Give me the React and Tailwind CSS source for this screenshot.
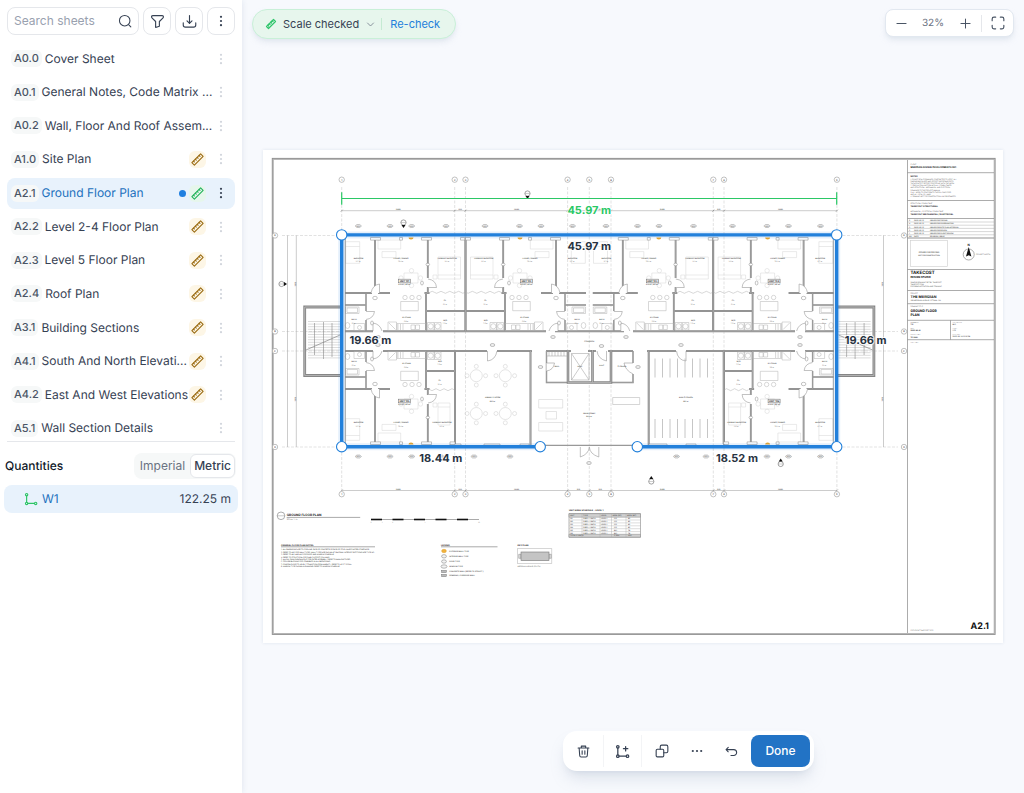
import { Fragment } from "react";
import { TbRuler2 } from "react-icons/tb";

const FONT = "font-['Inter','Liberation_Sans',sans-serif]";

const sheets = [
  { code: "A0.0", name: "Cover Sheet" },
  { code: "A0.1", name: "General Notes, Code Matrix ..." },
  { code: "A0.2", name: "Wall, Floor And Roof Assem..." },
  { code: "A1.0", name: "Site Plan", scale: true },
  { code: "A2.1", name: "Ground Floor Plan", scale: true, active: true },
  { code: "A2.2", name: "Level 2-4 Floor Plan", scale: true },
  { code: "A2.3", name: "Level 5 Floor Plan", scale: true },
  { code: "A2.4", name: "Roof Plan", scale: true },
  { code: "A3.1", name: "Building Sections", scale: true },
  { code: "A4.1", name: "South And North Elevati...", scale: true },
  { code: "A4.2", name: "East And West Elevations", scale: true },
  { code: "A5.1", name: "Wall Section Details" },
];

function Icon({ size = 16, stroke = 1.6, className = "", children }) {
  return (
    <svg
      width={size}
      height={size}
      viewBox="0 0 24 24"
      fill="none"
      stroke="currentColor"
      strokeWidth={stroke}
      strokeLinecap="round"
      strokeLinejoin="round"
      className={`shrink-0 ${className}`}
      aria-hidden="true"
    >
      {children}
    </svg>
  );
}

function Dots({ size = 14, horizontal = false, className = "" }) {
  return (
    <svg width={size} height={size} viewBox="0 0 14 14" fill="currentColor" className={className} aria-hidden="true">
      {[2.8, 7, 11.2].map((p) => (
        <circle key={p} cx={horizontal ? p : 7} cy={horizontal ? 7 : p} r="1.1" />
      ))}
    </svg>
  );
}

function PolylineIcon({ className = "", size = 16, plus = false }) {
  return (
    <Icon size={size} stroke={2} className={className}>
      <circle cx="4.5" cy="4.5" r="2" />
      <circle cx="4.5" cy="19.5" r="2" />
      <circle cx="20" cy="19.5" r="2" />
      <path d="M4.5 6.5v11M6.5 19.5H18" />
      {plus && <path d="M17 4v7M13.500 7.500h7" />}
    </Icon>
  );
}

function HeaderButton({ label, children }) {
  return (
    <button
      type="button"
      aria-label={label}
      className="flex size-7 shrink-0 items-center justify-center rounded-lg border border-gray-200 bg-white text-gray-700"
    >
      {children}
    </button>
  );
}

function SheetRow({ sheet }) {
  const { code, name, scale, active } = sheet;
  return (
    <li className={`flex h-[31px] items-center rounded-lg pr-[7px] pl-1 ${active ? "bg-[#e8f2fc]" : ""}`}>
      <span className="rounded-md bg-[#f6f8f8] px-[3px] text-[11px] leading-[17px] font-medium text-gray-600">{code}</span>
      <a href="#" className={`ml-[3px] min-w-0 flex-1 text-[12px] leading-4 whitespace-nowrap ${active ? "text-[#2170bd]" : "text-gray-700"}`}>
        {name}
      </a>
      {active && <span className="mr-[3px] size-[7px] rounded-full bg-[#1f7fe0]" />}
      {scale && (
        <span className={`flex size-[17px] items-center justify-center rounded-md ${active ? "bg-[#e6f6ec] text-[#22b35a]" : "bg-[#fdf6e6] text-[#9a6b12]"}`}>
          <TbRuler2 size={15} strokeWidth={1.7} />
        </span>
      )}
      <button type="button" aria-label={`Options for ${code}`} className={`ml-2 ${active ? "text-gray-700" : "text-gray-300"}`}>
        <Dots />
      </button>
    </li>
  );
}

function Sidebar() {
  return (
    <aside className="flex w-[242px] shrink-0 flex-col bg-white shadow-[0_0_6px_rgba(40,70,120,0.12)]">
      <div className="flex gap-1 px-[7px] pt-[7px]">
        <label className="flex h-7 min-w-0 flex-1 items-center rounded-lg border border-gray-200 px-1.5">
          <input
            type="text"
            aria-label="Search sheets"
            placeholder="Search sheets"
            className="min-w-0 flex-1 text-[12px] leading-4 outline-none placeholder:text-gray-400"
          />
          <Icon size={14} stroke={1.8} className="text-gray-700">
            <circle cx="11.500" cy="11.500" r="9" />
            <path d="M18.500 18.500 22 22" />
          </Icon>
        </label>
        <HeaderButton label="Filter">
          <Icon size={15} stroke={1.8}>
            <path d="M4.500 2.500h15c1.500 0 2 1 2 2 0 .8-.3 1.600-1 2.200L15 12v7.500l-6 2V12L3.500 6.700c-.7-.6-1-1.400-1-2.200 0-1 .5-2 2-2z" />
          </Icon>
        </HeaderButton>
        <HeaderButton label="Download">
          <Icon size={15} stroke={1.8}>
            <path d="M12 2.500V15M8 11l4 4 4-4M2 14v3.500c0 2 1 3.500 3.500 3.500h13c2.500 0 3.500-1.500 3.500-3.500V14" />
          </Icon>
        </HeaderButton>
        <HeaderButton label="More">
          <Dots />
        </HeaderButton>
      </div>

      <nav aria-label="Sheets" className="mx-[7px] mt-2 h-[399px] overflow-hidden border-b border-gray-200">
        <ul className="flex h-[401px] flex-col justify-between">
          {sheets.map((s) => (
            <SheetRow key={s.code} sheet={s} />
          ))}
        </ul>
      </nav>

      <div className="mt-[11px] flex items-center justify-between pr-[6px] pl-[5px]">
        <h2 className="text-[12px] leading-4 font-medium text-gray-900">Quantities</h2>
        <div className="flex rounded-lg bg-[#f6f8f8] p-px text-[12px] leading-4">
          <button type="button" className="px-[5px] py-1 text-gray-500">Imperial</button>
          <button type="button" className="rounded-md border border-gray-200 bg-white px-[3px] py-[3px] font-medium text-gray-700">Metric</button>
        </div>
      </div>

      <div className="mx-1 mt-[6px] flex h-7 items-center rounded-lg bg-[#e8f2fc] pr-[7px] pl-5 text-[12px] leading-4">
        <PolylineIcon size={14} className="text-[#2ec566]" />
        <span className="ml-1 flex-1 text-[#2170bd]">W1</span>
        <span className="text-gray-700">122.25 m</span>
      </div>
    </aside>
  );
}

/* ---------- floor plan drawing ---------- */

const INK = "#8b8b8b";
const LIGHT = "#d4d4d4";

function Walls({ d, w = 1.8 }) {
  return (
    <>
      <path d={d} stroke="#868686" strokeWidth={w} fill="none" />
      <path d={d} stroke="#b5b5b5" strokeWidth={w / 3} fill="none" />
    </>
  );
}

function Tiny({ x, y, size = 1.9, anchor = "middle", bold = true, fill = "#666", children }) {
  return (
    <text x={x} y={y} fontSize={size} textAnchor={anchor} fontWeight={bold ? 700 : 400} fill={fill}>
      {children}
    </text>
  );
}

// One dwelling, drawn in the position of unit 101; the others are mirrored copies.
function Unit({ flipX = 0, flipY = false, right = 465.5, label }) {
  const sx = flipX ? -1 : 1;
  const sy = flipY ? -1 : 1;
  const tx = (x) => (flipX ? flipX - x : x);
  const ty = (y) => (flipY ? 682 - y : y);
  const mid = (429 + right) / 2;
  const name = (x, y, t, area) => (
    <Fragment key={t}>
      <Tiny x={tx(x)} y={ty(y)}>{t}</Tiny>
      <Tiny x={tx(x)} y={ty(y) + 3.6} size={1.6} bold={false}>{area}</Tiny>
    </Fragment>
  );
  return (
    <g>
      <g transform={`translate(${flipX} ${flipY ? 682 : 0}) scale(${sx} ${sy})`}>
        <Walls d={`M375 238v55M345 293h27M378 293h12M427.800 238v40M427.800 287v6M424.500 293h5M426 293v38M426 311H${right}M${right} 238V331`} />
        <Walls w={1.4} d="M345 305h21M366 293v18M366 320v11" />
        <g fill="none" stroke={LIGHT} strokeWidth=".5">
          <path d="M345.700 241.700h14v21.600h-14zM345.700 246.500h14M378 240h22.700v9H378zM382 251.600h14v6h-14zM404 273h14v10h-14z" />
          <path d={`M438 257h${right - 443}v22H438zM438 275h${right - 443}M433 275h4v4h-4z`} />
          <circle cx="411.500" cy="270.700" r="2.200" />
          <circle cx="411.500" cy="285.500" r="2.200" />
          <circle cx="401" cy="278" r="2.200" />
          <circle cx="420.500" cy="278" r="2.200" />
        </g>
        <g fill="none" stroke="#b0b0b0" strokeWidth=".5">
          {[405, 412, 419].map((x) => (
            <circle key={x} cx={x} cy="297.500" r="2.200" />
          ))}
          <path d="M400.700 301.500h17.600v9.200h-17.600zM388 322h8.500v8.500H388zM389 323l6.500 6.500M397 323.500h29v7h-29zM411 325h4v4.500h-4zM415.500 325h4v4.500h-4zM398 324v6M403 324v6M400.500 324v6" />
          <path d="M345.500 307h13.500v6.500h-13.500zM347 308h10.500v4.500H347zM354 323.500h10.500v7H354z" />
          <circle cx="359.500" cy="327.500" r="2" />
          <ellipse cx="347.500" cy="325.500" rx="2.300" ry="3" />
          <path d="M427.500 322.500h6.500v7.500h-6.500zM434.500 322.500h6.500v7.500h-6.500z" />
          <circle cx="430.700" cy="326.300" r="2.600" />
          <circle cx="437.700" cy="326.300" r="2.600" />
          <path d={right > 460 ? "M430 292.300q2.200-2 4.400 0t4.400 0 4.400 0 4.400 0 4.400 0 4.400 0 4.400 0 4 0" : "M430 292.300q2-2 4 0t4 0 4 0 4 0 4 0 4 0"} />
        </g>
        <g fill="#fff" stroke="#999" strokeWidth=".6">
          <path d="M379.500 293v-9q-7 1-8.500 9M428 279q8 1 8.500 8.500h-8M366 311.500h8.500q-1 7-8.500 8M373 331v-8q7 1 9 8" />
          <path d="M370.500 237.500h10v2.600h-10zM421.500 237.500h10v2.600h-10zM399.500 237.500h3v2.600h-3z" />
          <path d={`M${right - 5} 237.500h5v2.600h-5z`} />
        </g>
        <path d="M408.500 237.500h5a2.500 2 0 0 1-5 0z" fill="#e9a52a" />
        <g fill="#fff" stroke="#888" strokeWidth=".5">
          <ellipse cx="375" cy="298" rx="2.300" ry="1.700" />
          <ellipse cx="422" cy="283" rx="1.400" ry="2" />
          <ellipse cx="427.800" cy="264.500" rx="1.800" ry="1.300" />
          <ellipse cx="372" cy="323" rx="1.400" ry="2" />
        </g>
      </g>
      <rect x={tx(404.500) - 6} y={ty(281) - 1.800} width="12" height="3.600" fill="#fff" stroke="#777" strokeWidth=".6" />
      <Tiny x={tx(404.500)} y={ty(281) + 0.9} size={2.300} fill="#222">{label}</Tiny>
      <Tiny x={tx(404.500)} y={ty(281) + 4.400} size={1.800}>913 SF / 85 m²</Tiny>
      {name(358.500, 258.800, "BEDROOM", "11.2 m²")}
      {name(401, 258.800, "LIVING / DINING", "26.4 m²")}
      {name(mid, 258.800, "PRIMARY BEDROOM", "14.1 m²")}
      {name(406.500, 318, "KITCHEN", "9.6 m²")}
      {name(354, 320, "BATH", "5.1 m²")}
      {name(mid - 2, 301, "CL.", "3.1 m²")}
      {name(mid - 2, 320.500, "W/D", "2.9 m²")}
    </g>
  );
}

const gridX = [341.7, 454.7, 465.5, 567.6, 589.3, 611, 713.3, 724, 836.9];
const gridY = [235.5, 331.5, 351, 447];
const tagsTop = [358.3, 390, 411.7, 446, 485, 519.5, 541, 572.5, 606, 637.5, 659, 693.5, 732.5, 767, 788.5, 820.5];
const tagsBottom = [358.3, 390, 411.7, 441, 474, 510, 676.5, 706, 767, 788.5, 820.5];

function Bubble({ x, y, children }) {
  return (
    <g>
      <circle cx={x} cy={y} r="2.700" fill="#fff" stroke="#999" strokeWidth=".6" />
      <Tiny x={x} y={y + 0.9} size={2.400}>{children}</Tiny>
    </g>
  );
}

function SectionMark({ x, y, dir }) {
  const tri = { down: "M-2 2.500h4L0 5.500z", up: "M-2-2.500h4L0-5.500z", right: "M2.500-2v4L5.500 0z" }[dir];
  return (
    <g transform={`translate(${x} ${y})`}>
      <circle r="2.600" fill="#fff" stroke="#666" strokeWidth=".6" />
      <path d="M-2.600 0h5.200" stroke="#888" strokeWidth=".4" />
      <path d={tri} fill="#111" />
    </g>
  );
}

function Stair({ mirror = false }) {
  return (
    <g transform={mirror ? "translate(1178.600 0) scale(-1 1)" : undefined}>
      <Walls w={2.800} d="M342 307H304.700V375.500H342" />
      <g stroke="#b8b8b8" strokeWidth=".5">
        {Array.from({ length: 15 }, (_, i) => (
          <path key={i} d={`M308 ${321.5 + i * 2.6}h32`} />
        ))}
      </g>
      <path d="M314.500 323v32M323.500 322v37M332 323v34" stroke="#888" strokeWidth=".6" />
      <path d="M306 350l34-15" stroke="#777" strokeWidth=".6" />
    </g>
  );
}

function GridAndDims() {
  return (
    <g fill="none">
      <g stroke="#c4c4c4" strokeWidth=".5" strokeDasharray="3 1.500">
        {gridX.map((x) => (
          <path key={x} d={`M${x} 187V490`} />
        ))}
        {gridY.map((y) => (
          <path key={y} d={`M282 ${y}H341M838 ${y}H898`} />
        ))}
      </g>
      <path d="M341.700 210.700H837M341.700 490.500H837M287.500 235.500V447M296.300 235.500V447M883.500 235.500V447" stroke="#aaa" strokeWidth=".6" />
      {gridX.map((x, i) => (
        <Fragment key={x}>
          <path d={`M${x - 1} 211.700l2-2M${x - 1} 491.500l2-2`} stroke="#666" strokeWidth=".5" />
          <Bubble x={x} y={179.7}>{i + 1}</Bubble>
          <Bubble x={x} y={494.2}>{i + 1}</Bubble>
          {i > 0 && (
            <>
              <Tiny x={(x + gridX[i - 1]) / 2} y={210.300} size={1.600}>{x - gridX[i - 1] > 50 ? "10480" : "1010"}</Tiny>
              <Tiny x={(x + gridX[i - 1]) / 2} y={490} size={1.600}>{x - gridX[i - 1] > 50 ? "10480" : "1010"}</Tiny>
            </>
          )}
        </Fragment>
      ))}
      {gridY.map((y, i) => (
        <Fragment key={y}>
          <Bubble x={275} y={y}>{"ABCD"[i]}</Bubble>
          <Bubble x={904} y={y}>{"ABCD"[i]}</Bubble>
        </Fragment>
      ))}
      {[["t", 226, tagsTop], ["b", 456.5, tagsBottom]].map(([k, y, xs]) =>
        xs.map((x) => (
          <g key={k + x}>
            <path d={`M${x - 3.2} ${y}l1.800-1.500h2.800l1.800 1.500-1.800 1.500h-2.800z`} stroke="#999" strokeWidth=".5" fill="#e8e8e8" />
            <Tiny x={x} y={y + 0.7} size={1.600} fill="#888">W01</Tiny>
          </g>
        ))
      )}
      <g fill="#555">
        <text transform="translate(295.800 284) rotate(-90)" fontSize="1.800" textAnchor="middle">9020</text>
        <text transform="translate(295.800 399) rotate(-90)" fontSize="1.800" textAnchor="middle">9020</text>
        <text transform="translate(883 284) rotate(-90)" fontSize="1.800" textAnchor="middle">9020</text>
        <text transform="translate(883 399) rotate(-90)" fontSize="1.800" textAnchor="middle">9020</text>
      </g>
    </g>
  );
}

function CommonRooms() {
  const tables = [[476.3, 375.7], [505.3, 375.7], [476.3, 413.5], [505.3, 413.5]];
  return (
    <g fill="none">
      <Walls w={2} d="M345 331.200H373M383 331.200H546M555 331.200H624M633 331.200H795M805 331.200H834" />
      <Walls w={2} d="M345 351H373M383 351H487M497 351H532M546 351H571M588 351H596M608 351H633M647 351H676M686 351H795M805 351H834" />
      <Walls w={2} d="M530.500 351V446M648.700 351V446M455 351V446M724 351V446" />
      <Walls w={1.400} d="M546.500 351v31.500H568M633 351v12M633 374v8.500H611" />
      <Walls w={2.600} d="M568 350V382.500H611V350M592.500 350v32.500" />
      <path d="M540 445.300h97" stroke="#999" strokeWidth="1.200" />
      <g stroke="#aaa" strokeWidth=".6">
        <path d="M571.500 353.500h17.500v26.500h-17.500zM571.500 353.500l17.500 26.500M589 353.500l-17.500 26.500" />
        <path d="M549 352v4M552 352v4M555 352v4M558 352v4M561 352v4M564 352v4M547 356h20" />
      </g>
      <g fill="#fff" stroke="#999" strokeWidth=".6">
        <path d="M487.500 351v10q8-1 9.500-10M676.500 351q1 9 9.500 10v-10M597 351q1 8 9.500 10v-10M546.500 363h8q-1 7-8 8M633 363h-9q1 7 9 11" />
        <path d="M589.300 447q-.5 7-9 10v-10M589.300 447q.5 7 9.500 10v-10" />
        <path d="M484 444h16v2.500h-16zM450 444h11v2.500h-11zM520 444h9v2.500h-9zM649 444h18v2.500h-18zM686 444h10v2.500h-10z" />
      </g>
      <g stroke={LIGHT} strokeWidth=".6">
        {tables.map(([x, y]) => (
          <g key={`${x}-${y}`}>
            <circle cx={x} cy={y} r="6" />
            <circle cx={x} cy={y - 9.3} r="2" />
            <circle cx={x} cy={y + 9.3} r="2" />
            <circle cx={x - 9.3} cy={y} r="2" />
            <circle cx={x + 9.3} cy={y} r="2" />
          </g>
        ))}
        <path d="M538.700 399.500h24v8.500h-24zM546 411.500h10.500v7.500h-10.500zM538.700 422.500h24v8.500h-24z" />
        <path stroke="#bbb" d="M612.700 397.500h27v7h-27z" />
      </g>
      <g stroke="#b8b8b8" strokeWidth=".8">
        {[655, 662.5, 670, 677.5, 685, 692.5, 700, 707.5].map((x) => (
          <path key={x} d={`M${x} 358.500v19M${x} 419v19`} />
        ))}
      </g>
      {[[492.5, 345], [553, 337], [589, 463], [626, 337], [681, 345], [601.5, 346], [378, 345], [378, 337], [800, 337], [800, 345], [540.5, 367], [638, 367]].map(([x, y]) => (
        <ellipse key={`${x}-${y}`} cx={x} cy={y} rx="2.300" ry="1.500" stroke="#999" strokeWidth=".6" fill="#eee" />
      ))}
      <Tiny x={492.700} y={398}>AMENITY ROOM</Tiny>
      <Tiny x={492.700} y={401.600} size={1.600}>66.2 m²</Tiny>
      <Tiny x={589.300} y={413.800}>MAIN LOBBY</Tiny>
      <Tiny x={589.300} y={417.200} size={1.600}>84.0 m²</Tiny>
      <Tiny x={686} y={398}>BIKE STORAGE</Tiny>
      <Tiny x={686} y={401.600} size={1.600}>68.1 m²</Tiny>
      <Tiny x={589.300} y={341.600}>CORRIDOR</Tiny>
      <Tiny x={557} y={367}>MAIL</Tiny>
      <Tiny x={580} y={367}>ELEV.</Tiny>
      <Tiny x={602} y={366}>ELEC.</Tiny>
      <Tiny x={622} y={367}>STORAGE</Tiny>
    </g>
  );
}

const notes = [
  "1. ALL DIMENSIONS ARE TO GRID LINE, FACE OF CONCRETE OR FACE OF STUD UNLESS NOTED OTHERWISE.",
  "2. REFER TO A0.2 FOR WALL TYPES. WALL TYPES ARE SHOWN AT DIAGRAM; INTERIOR PARTITIONS ARE TYPE W3.",
  "3. REFER TO A0.1 AND A0.2 FOR DOOR AND WINDOW SCHEDULE.",
  "4. REFER TO STRUCTURAL FOR SLAB, SUPPORT COLUMNS.",
  "5. ALLOW 15MM CLEARANCE AT PRE-RATED ASSEMBLY. REFER TO MANUFACTURER.",
  "6. PROVIDE BLOCKING FOR GRAB BARS IN ALL BATHROOMS.",
  "7. CONFIRM FLOOR TO LEVEL 5 TRANSITION FROM AMENITY. REFER TO A2.2 TYPICAL.",
  "8. WINDOW TYPE SHOWN IN DIAMOND. REFER TO WINDOW SCHEDULE.",
];

function SheetNotes() {
  return (
    <g>
      <circle cx="281" cy="515.800" r="3.800" fill="#fff" stroke="#777" strokeWidth=".6" />
      <path d="M277.200 515.800h7.600" stroke="#777" strokeWidth=".4" />
      <Tiny x={286.700} y={516.300} size={3.200} anchor="start" fill="#222">GROUND FLOOR PLAN</Tiny>
      <path d="M286.700 517.400h73.500" stroke="#555" strokeWidth=".5" />
      <Tiny x={286.700} y={520.300} size={1.900} anchor="start" bold={false}>SCALE: 1:75</Tiny>
      <path d="M371 519.500h108" stroke="#aaa" strokeWidth="1.200" />
      {[371, 392.5, 414, 435.5, 457].map((x) => (
        <path key={x} d={`M${x} 519.500h11`} stroke="#111" strokeWidth="1.600" />
      ))}
      {[["0", 371], ["1", 382], ["2", 392.5], ["5", 425], ["10", 479]].map(([t, x]) => (
        <Tiny key={t} x={x} y={523} size={1.800} bold={false}>{t}</Tiny>
      ))}
      <Tiny x={281} y={546.300} size={2.200} anchor="start" fill="#222">GENERAL FLOOR PLAN NOTES</Tiny>
      <path d="M281 546.800h94" stroke="#555" strokeWidth=".5" />
      {notes.map((n, i) => (
        <Tiny key={n} x={281} y={550.3 + i * 2.4} size={1.700} anchor="start" bold={false} fill="#333">{n}</Tiny>
      ))}

      <Tiny x={441} y={546.300} size={2.200} anchor="start" fill="#222">LEGEND</Tiny>
      <path d="M441 546.800h56.500" stroke="#555" strokeWidth=".5" />
      {["EXTERIOR WALL TYPE", "INTERIOR WALL TYPE", "DOOR TYPE", "WINDOW TYPE", "CONCRETE WALL (REFER TO STRUCT.)", "DEMISING / CORRIDOR WALL"].map((t, i) => {
        const y = [551, 556.3, 561.5, 566.5, 571.5, 575.5][i];
        return (
          <g key={t}>
            {i < 4 ? (
              <ellipse cx="444" cy={y} rx={i === 3 ? 3 : 2.4} ry="1.700" fill={i === 0 ? "#f0b23c" : "#f3f3f3"} stroke={i === 0 ? "#e0a030" : "#777"} strokeWidth=".5" />
            ) : (
              <rect x="441.500" y={y - 1.2} width="5" height="2.400" fill="#bbb" stroke="#666" strokeWidth=".4" />
            )}
            <Tiny x={449.300} y={y + 0.7} size={1.800} anchor="start">{t}</Tiny>
          </g>
        );
      })}

      <Tiny x={517.500} y={546.300} size={2.200} anchor="start" fill="#222">KEY PLAN</Tiny>
      <rect x="517.300" y="548.700" width="34.500" height="14.800" fill="none" stroke="#bbb" strokeWidth=".6" />
      <path d="M518.700 554.300h2.300v4h-2.300zM549 554.300h2.300v4H549z" fill="#ddd" stroke="#888" strokeWidth=".5" />
      <rect x="521" y="552" width="28" height="8.600" fill="#c4c4c4" stroke="#777" strokeWidth=".6" />
      <Tiny x={517.500} y={567.200} size={1.700} anchor="start" bold={false}>MERIDIAN AVENUE (SOUTH)</Tiny>

      <Tiny x={569} y={511.300} size={2.200} anchor="start" fill="#222">UNIT AREA SCHEDULE - LEVEL 1</Tiny>
      <rect x="569" y="513.700" width="71.500" height="23.500" fill="#fff" stroke="#888" strokeWidth=".6" />
      <path d="M569 513.700h71.500v3.500H569zM569 534.300h71.500v2.900H569z" fill="#d0d0d0" stroke="#888" strokeWidth=".5" />
      <path d="M582 513.700v23.500M600 513.700v23.500M611.500 513.700v23.500M626 513.700v23.500M569 520h71.500M569 522.900h71.500M569 525.800h71.500M569 528.700h71.500M569 531.600h71.500" stroke="#aaa" strokeWidth=".4" />
      {["UNIT", "TYPE", "LEVEL", "AREA (SF)", "AREA (M²)"].map((t, c) => (
        <Tiny key={t} x={[570, 583, 601, 612.5, 627][c]} y={516.200} size={1.800} anchor="start">{t}</Tiny>
      ))}
      {["101", "102", "103", "104", "105", "106"].map((u, r) =>
        [u, "2 BED + 1 BATH", "LEVEL 1", r < 4 ? "913" : "841", r < 4 ? "85" : "78"].map((t, c) => (
          <Tiny key={u + c} x={[570, 583, 601, 614, 628][c]} y={519.3 + r * 2.9} size={1.700} anchor="start">{t}</Tiny>
        ))
      )}
      <Tiny x={570} y={536.400} size={1.800} anchor="start">TOTAL 6 UNITS</Tiny>
      <Tiny x={614} y={536.400} size={1.800} anchor="start">5,334</Tiny>
      <Tiny x={628} y={536.400} size={1.800} anchor="start">496</Tiny>
    </g>
  );
}

const titleText = [
  [165, 1.6, 0, "CLIENT"],
  [168, 2.3, 1, "MERIDIAN AVENUE DEVELOPMENTS INC."],
  [177, 2.1, 1, "NOTES"],
  [180, 1.6, 0, "1. DO NOT SCALE DRAWINGS. CONTRACTOR TO VERIFY ALL"],
  [182.1, 1.6, 0, "DIMENSIONS ON SITE AND REPORT DISCREPANCIES TO"],
  [184.2, 1.6, 0, "THE ARCHITECT BEFORE PROCEEDING WITH THE WORK."],
  [186.3, 1.6, 0, "2. READ IN CONJUNCTION WITH ALL CONSULTANTS"],
  [188.4, 1.6, 0, "AND STRUCTURAL, MECHANICAL AND ELECTRICAL"],
  [190.5, 1.6, 0, "DRAWINGS TO THE PROJECT MANUAL."],
  [192.6, 1.6, 0, "3. ALL WORK TO CONFORM TO THE BUILDING CODE."],
  [194.7, 1.6, 0, "AND ALL LOCAL BY-LAWS."],
  [196.8, 1.6, 0, "4. DRAWING NOT FOR CONSTRUCTION UNLESS STAMPED."],
  [204, 1.6, 0, "STRUCTURAL CONSULTANT"],
  [207, 2.2, 1, "TAKECOST STRUCTURAL"],
  [212, 1.6, 0, "MECHANICAL / ELECTRICAL CONSULTANT"],
  [215, 2.2, 1, "TAKECOST MECHANICAL / ELECTRICAL"],
  [274.3, 4.4, 1, "TAKECOST"],
  [278.3, 2.6, 1, "DESIGN STUDIO"],
  [282.5, 1.7, 0, "SAMPLE DRAWING SET BY TAKECOST"],
  [284.7, 1.7, 0, "TAKECOST.COM"],
  [286.9, 1.7, 0, "FOR DEMONSTRATION AND TRAINING"],
  [294, 1.6, 0, "PROJECT"],
  [298, 3.6, 1, "THE MERIDIAN"],
  [301.3, 1.7, 0, "100 MERIDIAN AVENUE, OTTAWA, ON"],
  [306.8, 1.6, 0, "DRAWING TITLE"],
  [312, 3.3, 1, "GROUND FLOOR"],
  [315.6, 3.3, 1, "PLAN"],
  [322.5, 1.5, 0, "DRAWN BY"],
  [325, 1.7, 1, "T.C."],
  [328.5, 1.5, 0, "DATE"],
  [331, 1.7, 1, "2025-06-01"],
  [334.5, 1.5, 0, "PROJECT NO."],
  [337.5, 1.7, 1, "TC-2401"],
  [343, 1.5, 0, "SHEET NO."],
];

function TitleBlock() {
  return (
    <g>
      <path d="M907.500 160V633M907.500 172.700H994M907.500 200.500H994M907.500 218.500H994M907.500 238H994M907.500 269.500H994M907.500 290.500H994M907.500 303.700H994M907.500 320.300H994M907.500 339.700H994M950.500 320.300v19.400" stroke="#888" strokeWidth=".7" fill="none" />
      {titleText.map(([y, size, bold, t]) => (
        <Tiny key={y} x={910.500} y={y} size={size} anchor="start" bold={!!bold} fill={bold ? "#111" : "#555"}>{t}</Tiny>
      ))}
      {[["CHECKED BY", 322.5, "M.C."], ["SCALE", 328.5, "1:75"], ["PLOT DATE", 334.5, "2025-06-14 12:16 PM"]].map(([t, y, v]) => (
        <g key={t}>
          <Tiny x={952.500} y={y} size={1.500} anchor="start" bold={false}>{t}</Tiny>
          <Tiny x={952.500} y={y + 2.5} size={1.700} anchor="start">{v}</Tiny>
        </g>
      ))}
      {["ISSUED FOR PRICING", "ISSUED FOR COORDINATION", "ISSUED FOR SITE PLAN APPROVAL", "ISSUED FOR REVIEW", "ISSUED FOR CLIENT REVIEW", "REVISION / ISSUE"].map((t, i) => (
        <g key={t}>
          <Tiny x={909} y={221.2 + i * 3.2} size={1.700} anchor="start">{i === 5 ? "NO." : 5 - i}</Tiny>
          <Tiny x={914} y={221.2 + i * 3.2} size={1.700} anchor="start">{i === 5 ? "DATE" : "2025-05-12"}</Tiny>
          <Tiny x={930} y={221.2 + i * 3.2} size={1.700} anchor="start">{t}</Tiny>
          <path d={`M907.500 ${222 + i * 3.2}H994`} stroke="#999" strokeWidth=".4" />
        </g>
      ))}
      <rect x="910.500" y="240.500" width="37" height="26" fill="none" stroke="#ccc" strokeWidth=".6" />
      <Tiny x={929} y={253} size={2}>ISSUED FOR PRICING</Tiny>
      <Tiny x={929} y={256.300} size={1.700}>NOT FOR CONSTRUCTION</Tiny>
      <circle cx="968.700" cy="254.500" r="5.500" fill="#fff" stroke="#777" strokeWidth=".6" />
      <path d="M968.700 247l2.700 9.500-2.700-1.300-2.700 1.300z" fill="#111" />
      <Tiny x={968.700} y={246.300} size={3} fill="#111">N</Tiny>
      <Tiny x={976} y={255} size={1.700} anchor="start" bold={false}>PROJECT NORTH</Tiny>
      <Tiny x={910.500} y={630.600} size={1.600} anchor="start" bold={false}>COPYRIGHT TAKECOST 2025</Tiny>
      <text x="989" y="628.500" textAnchor="end" fontSize="9" fontWeight="700" fill="#111">A2.1</text>
    </g>
  );
}

const measures = [
  ["45.97 m", 589.3, 250, "#27323f"],
  ["19.66 m", 370.5, 344, "#27323f"],
  ["19.66 m", 865.7, 344, "#27323f"],
  ["18.44 m", 440.8, 462, "#27323f"],
  ["18.52 m", 737, 462, "#27323f"],
  ["45.97 m", 589.3, 214, "#2bc866"],
];

function Drawing() {
  return (
    <svg viewBox="263 150 740 493" className="block w-full bg-white shadow-[0_0_3px_rgba(40,70,120,0.12)]" role="img" aria-label="Ground floor plan">
      <rect x="272.700" y="158.800" width="722" height="475.200" fill="none" stroke="#8f8f8f" strokeWidth="1.800" />
      <rect x="273" y="159.100" width="721.400" height="474.600" fill="none" stroke="#c9c9c9" strokeWidth=".6" />
      <GridAndDims />
      <CommonRooms />
      <Stair />
      <Stair mirror />
      <Unit label="UNIT 101" />
      <Unit label="UNIT 102" flipX={931} />
      <g transform="translate(247.800 0)">
        <Unit label="UNIT 103" />
      </g>
      <Unit label="UNIT 104" flipX={1178.600} />
      <Unit label="UNIT 105" flipY right={455} />
      <Unit label="UNIT 106" flipX={1178.600} flipY right={455} />
      <path d="M345.300 238V444M833.300 238V444" stroke={INK} strokeWidth=".8" />
      <SectionMark x={527.500} y={193.500} dir="down" />
      <SectionMark x={403.500} y={222.500} dir="down" />
      <SectionMark x={281.500} y={284} dir="right" />
      <SectionMark x={651.300} y={481.500} dir="up" />
      <SectionMark x={780.700} y={464} dir="up" />
      <SheetNotes />
      <TitleBlock />

      <path d="M341.700 198.500H836.700M341.700 192.300v12.400M836.700 192.300v12.400" stroke="#2bc866" strokeWidth="1.200" fill="none" />
      <path d="M540.200 446.700H341.700V234.900H836.700V446.700H637.300" fill="none" stroke="#1f7fe0" strokeOpacity=".12" strokeWidth="7" />
      <path d="M540.200 446.700H341.700V234.900H836.700V446.700H637.300" fill="none" stroke="#2280db" strokeWidth="3.400" />
      {[[540.2, 446.7], [341.7, 446.7], [341.7, 234.9], [836.7, 234.9], [836.7, 446.7], [637.3, 446.7]].map(([x, y]) => (
        <circle key={`${x}-${y}`} cx={x} cy={y} r="5.200" fill="#fff" stroke="#2280db" strokeWidth="1.100" />
      ))}
      {measures.map(([t, x, y, color]) => (
        <text key={`${x}-${y}`} x={x} y={y} textAnchor="middle" fontSize="11" fontWeight="700" fill={color} stroke="#fff" strokeWidth="2" strokeOpacity=".8" paintOrder="stroke">
          {t}
        </text>
      ))}
    </svg>
  );
}

/* ---------- floating controls ---------- */

function ScalePill() {
  return (
    <div className="flex h-[30px] items-center rounded-full border border-[#c9f0d8] bg-[#e7f6ed] pr-[15px] pl-3 text-[11px] leading-4 shadow-md shadow-slate-300/40">
      <TbRuler2 size={12} className="text-[#2fc56b]" strokeWidth={2.400} />
      <button type="button" className="ml-1.5 flex items-center text-gray-700">
        Scale checked
        <Icon size={9} stroke={2} className="ml-[7px] text-gray-500">
          <path d="M4 8l8 8 8-8" />
        </Icon>
      </button>
      <span className="mr-2 ml-1.5 h-3 w-px bg-[#c5ead3]" />
      <button type="button" className="text-[#2280db]">Re-check</button>
    </div>
  );
}

function ZoomControl() {
  return (
    <div className="flex h-7 items-center rounded-lg border border-slate-200 bg-white text-gray-600 shadow-md shadow-slate-300/40">
      <button type="button" aria-label="Zoom out" className="flex w-[31px] justify-center">
        <Icon size={11} stroke={2.2}><path d="M2 12h20" /></Icon>
      </button>
      <span className="w-8 text-center text-[10px] leading-4 text-gray-500">32%</span>
      <button type="button" aria-label="Zoom in" className="flex w-8 justify-center">
        <Icon size={11} stroke={2.2}><path d="M2 12h20M12 2v20" /></Icon>
      </button>
      <span className="h-[17px] w-px bg-gray-200" />
      <button type="button" aria-label="Fit to screen" className="flex w-[31px] justify-center">
        <Icon size={14} stroke={2}>
          <path d="M2 8V5a3 3 0 0 1 3-3h3M16 2h3a3 3 0 0 1 3 3v3M22 16v3a3 3 0 0 1-3 3h-3M8 22H5a3 3 0 0 1-3-3v-3" />
        </Icon>
      </button>
    </div>
  );
}

function ToolButton({ label, children }) {
  return (
    <button type="button" aria-label={label} className="flex h-8 w-[35px] items-center justify-center">
      {children}
    </button>
  );
}

function Toolbar() {
  return (
    <div className="flex items-center rounded-[14px] bg-white py-1 pr-1 pl-[3px] text-gray-700 shadow-lg shadow-slate-400/25">
      <ToolButton label="Delete">
        <Icon size={13} stroke={2}>
          <path d="M2 5.500h20M8 5V2h8v3M4 6l1 13.500c.1 1.500 1 2.500 2.500 2.500h9c1.500 0 2.400-1 2.500-2.500L20 6M9.500 10.500v6.500M14.500 10.500v6.500" />
        </Icon>
      </ToolButton>
      <div className="ml-[2px] border-x border-gray-100 px-[1px]">
        <ToolButton label="Add segment"><PolylineIcon size={15} plus /></ToolButton>
      </div>
      <div className="pl-[2px]">
        <ToolButton label="Duplicate">
          <Icon size={14} stroke={1.900}>
            <rect x="2" y="9" width="13" height="13" rx="2" />
            <path d="M9 9V4.500A2.500 2.500 0 0 1 11.500 2h8A2.500 2.500 0 0 1 22 4.500v8a2.500 2.500 0 0 1-2.500 2.500H15" />
          </Icon>
        </ToolButton>
      </div>
      <ToolButton label="More actions"><Dots size={14} horizontal /></ToolButton>
      <ToolButton label="Undo">
        <Icon size={13} stroke={2}>
          <path d="M6 4.500 2 8.500l4 4M2 8.500h14a5.500 5.500 0 0 1 0 11h-5" />
        </Icon>
      </ToolButton>
      <button type="button" className="ml-[2px] h-8 rounded-lg bg-[#2273c5] px-[14px] text-[12px] leading-4 font-medium text-white">Done</button>
    </div>
  );
}

export default function App() {
  return (
    <div className={`flex min-h-screen bg-[#f7f9fd] text-gray-700 [text-rendering:geometricPrecision] ${FONT}`}>
      <Sidebar />
      <main className="relative flex min-w-0 flex-1 items-center px-[21px]">
        <Drawing />
        <div className="absolute inset-x-[10px] top-[9px] flex items-start justify-between">
          <ScalePill />
          <ZoomControl />
        </div>
        <div className="absolute inset-x-0 bottom-[22px] flex justify-center pl-[111px]">
          <Toolbar />
        </div>
      </main>
    </div>
  );
}
